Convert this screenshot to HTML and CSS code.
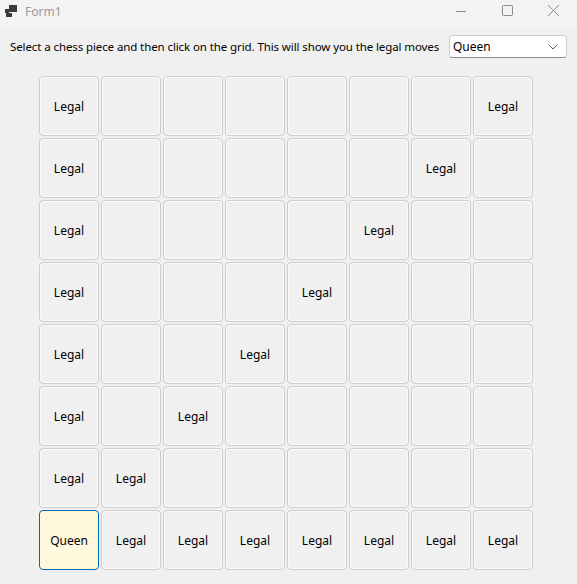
FILE: index.html
```html
<!DOCTYPE html>
<html>
<head>
<meta charset="utf-8">
<link rel="stylesheet" href="styles.css">
</head>
<body>
<div class="window">
  <div class="titlebar">
    <div class="title-left">
      <svg class="app-icon" width="12" height="12" viewBox="0 0 12 12">
        <rect x="4" y="0" width="8" height="7" fill="#3a3a3a"/>
        <rect x="0" y="4" width="4" height="4" fill="#3a3a3a"/>
        <rect x="1" y="8" width="6" height="4" fill="#3a3a3a"/>
      </svg>
      <span class="title">Form1</span>
    </div>
    <div class="controls">
      <svg class="ctl" width="46" height="26" viewBox="0 0 46 26"><line x1="18" y1="11.5" x2="28" y2="11.5" stroke="#8a8a8a" stroke-width="1"/></svg>
      <svg class="ctl" width="46" height="26" viewBox="0 0 46 26"><rect x="18.5" y="5.5" width="10" height="10" rx="1" fill="none" stroke="#8a8a8a" stroke-width="1"/></svg>
      <svg class="ctl" width="46" height="26" viewBox="0 0 46 26"><path d="M18 5 L29 16 M29 5 L18 16" stroke="#8a8a8a" stroke-width="1"/></svg>
    </div>
  </div>
  <div class="client">
    <div class="toprow">
      <span class="label">Select a chess piece and then click on the grid. This will show you the legal moves</span>
      <div class="combo">
        <span class="combo-text">Queen</span>
        <svg class="chev" width="10" height="6" viewBox="0 0 10 6"><path d="M0.5 0.5 L5 5 L9.5 0.5" fill="none" stroke="#606060" stroke-width="1"/></svg>
      </div>
    </div>
    <div class="board">
      <div class="cell">Legal</div><div class="cell"></div><div class="cell"></div><div class="cell"></div><div class="cell"></div><div class="cell"></div><div class="cell"></div><div class="cell">Legal</div>
      <div class="cell">Legal</div><div class="cell"></div><div class="cell"></div><div class="cell"></div><div class="cell"></div><div class="cell"></div><div class="cell">Legal</div><div class="cell"></div>
      <div class="cell">Legal</div><div class="cell"></div><div class="cell"></div><div class="cell"></div><div class="cell"></div><div class="cell">Legal</div><div class="cell"></div><div class="cell"></div>
      <div class="cell">Legal</div><div class="cell"></div><div class="cell"></div><div class="cell"></div><div class="cell">Legal</div><div class="cell"></div><div class="cell"></div><div class="cell"></div>
      <div class="cell">Legal</div><div class="cell"></div><div class="cell"></div><div class="cell">Legal</div><div class="cell"></div><div class="cell"></div><div class="cell"></div><div class="cell"></div>
      <div class="cell">Legal</div><div class="cell"></div><div class="cell">Legal</div><div class="cell"></div><div class="cell"></div><div class="cell"></div><div class="cell"></div><div class="cell"></div>
      <div class="cell">Legal</div><div class="cell">Legal</div><div class="cell"></div><div class="cell"></div><div class="cell"></div><div class="cell"></div><div class="cell"></div><div class="cell"></div>
      <div class="cell queen">Queen</div><div class="cell">Legal</div><div class="cell">Legal</div><div class="cell">Legal</div><div class="cell">Legal</div><div class="cell">Legal</div><div class="cell">Legal</div><div class="cell">Legal</div>
    </div>
  </div>
</div>
</body>
</html>
```
FILE: styles.css
```css
* { box-sizing: border-box; }
html, body {
  margin: 0;
  padding: 0;
  background: #f0f0f0;
  width: 577px;
  height: 584px;
  overflow: hidden;
}
body {
  font-family: "Noto Sans", "Open Sans", sans-serif;
  font-size: 12px;
  color: #000;
}
.window {
  width: 577px;
  height: 584px;
  display: flex;
  flex-direction: column;
}
.titlebar {
  height: 26px;
  background: #f3f3f3;
  display: flex;
  justify-content: space-between;
  align-items: flex-start;
}
.title-left {
  display: flex;
  align-items: center;
  height: 22px;
  padding-left: 5px;
}
.app-icon { display: block; }
.title {
  margin-left: 8px;
  color: #9a9a9a;
  font-size: 12px;
}
.controls {
  display: flex;
  margin-right: 1px;
}
.ctl { display: block; }
.client {
  flex: 1;
  background: #f0f0f0;
}
.toprow {
  display: flex;
  align-items: center;
  padding-left: 10px;
  margin-top: 9px;
  height: 23px;
}
.label {
  white-space: nowrap;
  font-size: 11.5px;
  letter-spacing: -0.1px;
}
.combo {
  margin-left: auto;
  margin-right: 10px;
  width: 118px;
  height: 23px;
  background: #fff;
  border: 1px solid #cfcfcf;
  border-bottom-color: #8a8a8a;
  border-radius: 3px;
  display: flex;
  align-items: center;
  justify-content: space-between;
  padding: 0 8px 0 3px;
}
.combo-text { line-height: 1; }
.chev { display: block; }
.board {
  margin-top: 18px;
  margin-left: 39px;
  display: grid;
  grid-template-columns: repeat(8, 60px);
  grid-auto-rows: 60px;
  gap: 2px;
}
.cell {
  background: #f0f0f0;
  border: 1px solid #cdcdcd;
  border-radius: 4px;
  box-shadow: inset 0 0 0 1px #fbfbfb;
  display: flex;
  align-items: center;
  justify-content: center;
  font-size: 12px;
}
.cell.queen {
  background: #fff8dc;
  border-color: #0067c0;
  box-shadow: none;
}
```
